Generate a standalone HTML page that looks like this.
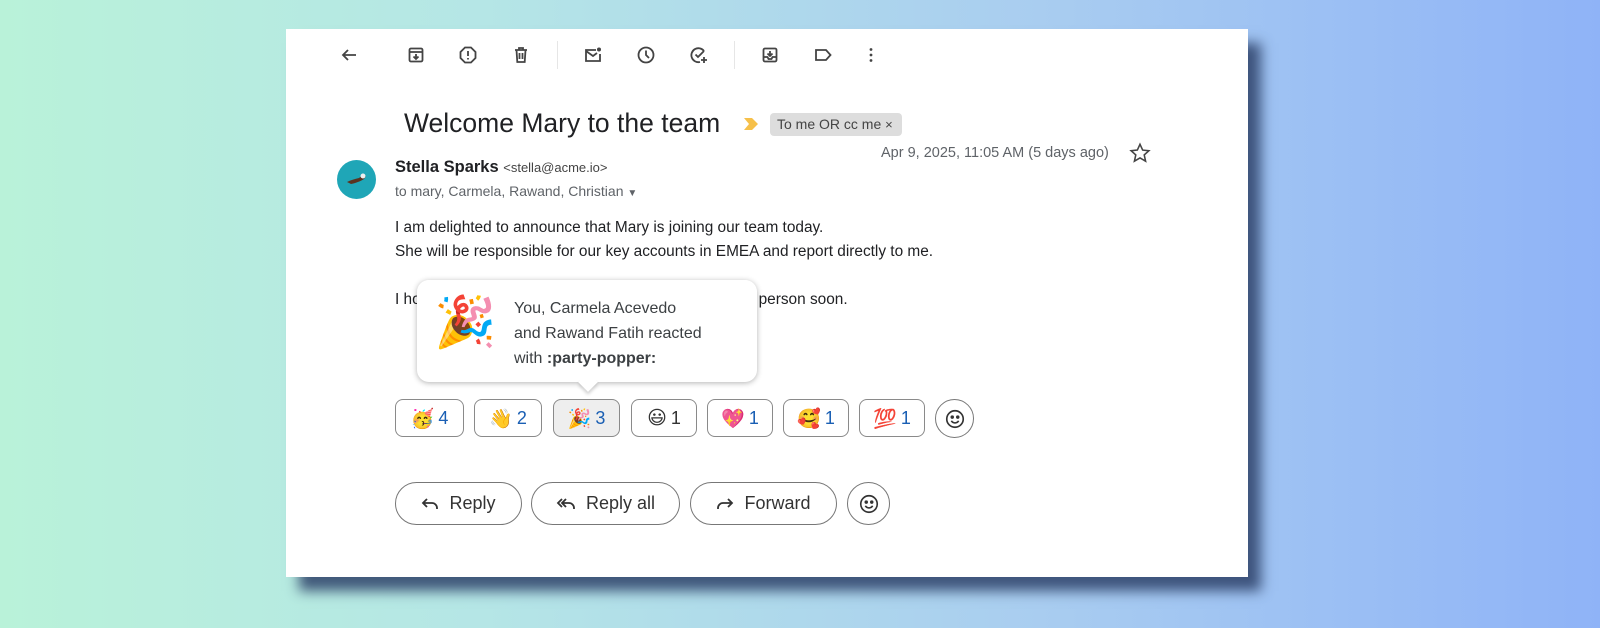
<!DOCTYPE html>
<html><head><meta charset="utf-8"><style>
*{margin:0;padding:0;box-sizing:border-box}
body{width:1600px;height:628px;overflow:hidden;background:linear-gradient(90deg,#b9f2d9 0%,#b5e6e6 30%,#a9cdf0 65%,#8fb3f7 100%);font-family:"Liberation Sans",Arial,sans-serif;position:relative;color:#202124}
.card{position:absolute;left:286px;top:29px;width:962px;height:548px;background:#fff;box-shadow:13px 14px 12px rgba(45,65,105,.85)}
.a{position:absolute}
.ic{position:absolute;top:46px;width:18px;height:18px}
.ic svg{width:18px;height:18px;stroke:#444;fill:none;stroke-width:1.8}
.div{position:absolute;top:41px;width:1px;height:28px;background:#e6e6e6}
.chip{position:absolute;top:399px;height:38px;border:1px solid #8a8a8a;border-radius:8px;font-size:18px;display:flex;align-items:center;justify-content:center;gap:4px;color:#1a5fb4}
.chip span.e{font-size:19px;font-family:"DejaVu Sans",sans-serif}
.btn{position:absolute;top:482px;height:43px;border:1px solid #777;border-radius:22px;font-size:18px;display:flex;align-items:center;justify-content:center;gap:10px;color:#333}
.circ{position:absolute;border:1px solid #777;border-radius:50%;display:flex;align-items:center;justify-content:center}
</style></head><body>
<div class="card"></div>
<div class="ic" style="left:340px"><svg viewBox="0 0 18 18"><path d="M16 9H3M8 4L3 9l5 5"/></svg></div>
<div class="ic" style="left:407px"><svg viewBox="0 0 18 18"><rect x="2.5" y="2.5" width="13" height="13" rx="1.5"/><path d="M2.5 6h13M9 8v5M6.5 10.5L9 13l2.5-2.5"/></svg></div>
<div class="ic" style="left:459px"><svg viewBox="0 0 18 18"><path d="M6 1.5h6L16.5 6v6L12 16.5H6L1.5 12V6z"/><path d="M9 5v5M9 12v1.5"/></svg></div>
<div class="ic" style="left:512px"><svg viewBox="0 0 18 18"><path d="M3 4h12M7 4V2h4v2M4.5 4l.8 12h7.4l.8-12M7.5 7v6M10.5 7v6"/></svg></div>
<div class="div" style="left:557px"></div>
<div class="ic" style="left:584px"><svg viewBox="0 0 18 18"><path d="M12 4H2v11h14V8"/><path d="M2 5l7 5 4-3"/><circle cx="15" cy="3.5" r="2" fill="#444" stroke="none"/></svg></div>
<div class="ic" style="left:637px"><svg viewBox="0 0 18 18"><circle cx="9" cy="9" r="7.5"/><path d="M9 4.5V9l3 3"/></svg></div>
<div class="ic" style="left:690px"><svg viewBox="0 0 18 18"><path d="M14 5A7 7 0 1 0 10 16"/><path d="M5.5 8.5L8 11l6-6M14 11v6M11 14h6"/></svg></div>
<div class="div" style="left:734px"></div>
<div class="ic" style="left:761px"><svg viewBox="0 0 18 18"><rect x="2.5" y="2.5" width="13" height="13" rx="1.5"/><path d="M2.5 11h4l1 2h3l1-2h4M9 5v5M6.5 7.5L9 10l2.5-2.5"/></svg></div>
<div class="ic" style="left:814px"><svg viewBox="0 0 18 18"><path d="M2 4h10l4.5 5L12 14H2z"/></svg></div>
<div class="ic" style="left:862px"><svg viewBox="0 0 18 18"><circle cx="9" cy="3.5" r="1.4" fill="#444" stroke="none"/><circle cx="9" cy="9" r="1.4" fill="#444" stroke="none"/><circle cx="9" cy="14.5" r="1.4" fill="#444" stroke="none"/></svg></div>
<div class="a" style="left:404px;top:108px;font-size:26.5px;color:#202124">Welcome Mary to the team</div>
<svg class="a" style="left:743px;top:117px" width="16" height="14" viewBox="0 0 16 14"><path d="M1 1h8l6 6-6 6H1l5-6z" fill="#f6c04a"/></svg>
<div class="a" style="left:770px;top:113px;width:132px;height:23px;background:#dddddd;border-radius:4px;font-size:14px;color:#444;padding:3px 0 0 7px">To me OR cc me <span style="font-size:13px">×</span></div>
<div class="a" style="left:881px;top:145px;font-size:14.5px;color:#5f6368">Apr 9, 2025, 11:05 AM (5 days ago)</div>
<svg class="a" style="left:1129px;top:142px" width="22" height="22" viewBox="0 0 24 24"><path d="M12 2.5l2.9 6.3 6.8.7-5.1 4.6 1.5 6.8L12 17.4l-6.1 3.5 1.5-6.8-5.1-4.6 6.8-.7z" fill="none" stroke="#444" stroke-width="1.7"/></svg>
<div class="a" style="left:337px;top:160px;width:39px;height:39px;border-radius:50%;background:#1fa6b7"></div>
<svg class="a" style="left:343px;top:170px" width="28" height="18" viewBox="0 0 28 18"><path d="M4 12c4-2 8-3 12-4l4-3 3 1-2 3c-3 2-8 4-13 5z" fill="#5a3320"/><circle cx="20" cy="6" r="2.5" fill="#eee"/></svg>
<div class="a" style="left:395px;top:158px;font-size:16.5px;font-weight:bold">Stella Sparks <span style="font-weight:normal;font-size:13px;color:#444">&lt;stella@acme.io&gt;</span></div>
<div class="a" style="left:395px;top:183px;font-size:14px;color:#5f6368">to mary, Carmela, Rawand, Christian <span style="font-size:10px">▼</span></div>
<div class="a" style="left:395px;top:216px;font-size:15.4px;line-height:24px;color:#202124">I am delighted to announce that Mary is joining our team today.<br>She will be responsible for our key accounts in EMEA and report directly to me.<br><br>I hope you will all have the opportunity to meet her in person soon.</div>
<div class="a" style="left:417px;top:280px;width:340px;height:102px;background:#fff;border-radius:12px;box-shadow:0 1px 6px rgba(0,0,0,.3)"></div>
<div class="a" style="left:581px;top:375px;width:14px;height:14px;background:#fff;transform:rotate(45deg);box-shadow:2px 2px 3px rgba(0,0,0,.18)"></div>
<div class="a" style="left:417px;top:280px;width:340px;height:100px;background:#fff;border-radius:12px"></div>
<div class="a" style="left:434px;top:292px;font-size:50px;font-family:'DejaVu Sans',sans-serif;line-height:60px">🎉</div>
<div class="a" style="left:514px;top:296px;font-size:16px;line-height:25px;color:#3c4043">You, Carmela Acevedo<br>and Rawand Fatih reacted<br>with <b>:party-popper:</b></div>
<div class="chip" style="left:395px;width:69px"><span class="e">🥳</span>4</div>
<div class="chip" style="left:474px;width:68px"><span class="e">👋</span>2</div>
<div class="chip" style="left:553px;width:67px;background:#eeeeee"><span class="e">🎉</span>3</div>
<div class="chip" style="left:631px;width:66px;color:#333"><span class="e">😃</span>1</div>
<div class="chip" style="left:707px;width:66px"><span class="e">💖</span>1</div>
<div class="chip" style="left:783px;width:66px"><span class="e">🥰</span>1</div>
<div class="chip" style="left:859px;width:66px"><span class="e">💯</span>1</div>
<div class="circ" style="left:935px;top:399px;width:39px;height:39px"><svg width="22" height="22" viewBox="0 0 24 24" fill="none" stroke="#333" stroke-width="1.8"><circle cx="12" cy="12" r="9"/><circle cx="9" cy="10" r="1" fill="#333"/><circle cx="15" cy="10" r="1" fill="#333"/><path d="M8 14c2 3 6 3 8 0"/></svg></div>
<div class="btn" style="left:395px;width:127px"><svg width="18" height="14" viewBox="0 0 18 14" fill="none" stroke="#333" stroke-width="1.8"><path d="M6 2L2 6l4 4M2 6h9a5 5 0 0 1 5 5v1"/></svg>Reply</div>
<div class="btn" style="left:531px;width:149px"><svg width="20" height="14" viewBox="0 0 20 14" fill="none" stroke="#333" stroke-width="1.8"><path d="M6 2L2 6l4 4M10 2L6 6l4 4M6 6h7a5 5 0 0 1 5 5v1"/></svg>Reply all</div>
<div class="btn" style="left:690px;width:147px"><svg width="18" height="14" viewBox="0 0 18 14" fill="none" stroke="#333" stroke-width="1.8"><path d="M12 2l4 4-4 4M16 6H7a5 5 0 0 0-5 5v1"/></svg>Forward</div>
<div class="circ" style="left:847px;top:482px;width:43px;height:43px"><svg width="22" height="22" viewBox="0 0 24 24" fill="none" stroke="#333" stroke-width="1.8"><circle cx="12" cy="12" r="9"/><circle cx="9" cy="10" r="1" fill="#333"/><circle cx="15" cy="10" r="1" fill="#333"/><path d="M8 14c2 3 6 3 8 0"/></svg></div>
</body></html>
